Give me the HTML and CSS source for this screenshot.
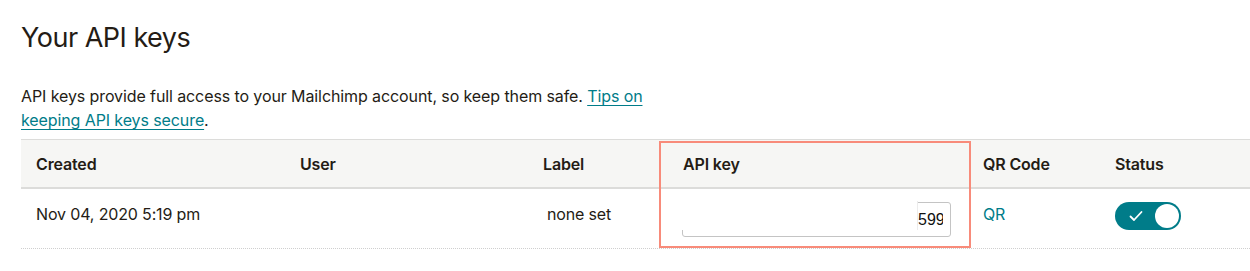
FILE: index.html
```html
<!DOCTYPE html>
<html>
<head>
    <meta name="viewport" content="width=device-width, initial-scale=1.0">
    <title>Your API keys</title>
    <link rel="stylesheet" href="styles.css">
</head>
<body>
    <div class="page">
        <h1 class="title">Your API keys</h1>
        <p class="intro">API keys provide full access to your Mailchimp account, so keep them safe. <a href="#">Tips on keeping API keys secure</a>.</p>

        <div class="keys">
            <div class="row head">
                <div class="cell">Created</div>
                <div class="cell">User</div>
                <div class="cell label-cell">Label</div>
                <div class="cell">API key</div>
                <div class="cell">QR Code</div>
                <div class="cell">Status</div>
            </div>
            <div class="row body">
                <div class="cell">Nov 04, 2020 5:19 pm</div>
                <div class="cell"></div>
                <div class="cell label-cell none">none set</div>
                <div class="cell">
                    <div class="key-field">
                        <!-- partie masquée de la clé -->
                        <div class="key-mask"></div>
                        <div class="key-text">5990</div>
                    </div>
                </div>
                <div class="cell"><a href="#" class="qr">QR</a></div>
                <div class="cell">
                    <div class="toggle">
                        <svg class="check" width="14" height="12" viewBox="0 0 14 12">
                            <path d="M1.5 6.5 L5 10 L12.5 2" fill="none" stroke="#fff" stroke-width="1.8" stroke-linecap="round" stroke-linejoin="round"/>
                        </svg>
                        <div class="knob"></div>
                    </div>
                </div>
            </div>
            <!-- cadre d'annotation -->
            <div class="highlight"></div>
        </div>
    </div>
</body>
</html>
```

FILE: styles.css
```css
body {
    margin: 0;
    font-family: "Inter", "Liberation Sans", sans-serif;
    color: #241c15;
    background: #fff;
}
.page {
    padding: 20px 0 0 21px;
}
.title {
    font-size: 27px;
    font-weight: 400;
    line-height: 36px;
    margin: 0;
    letter-spacing: -0.5px;
}
.intro {
    font-size: 16px;
    line-height: 24px;
    margin: 28px 0 7px 0;
    max-width: 640px;
    letter-spacing: -0.1px;
}
.intro a {
    color: #007c89;
    text-decoration: underline;
    text-underline-offset: 3px;
}
.keys {
    position: relative;
}
.row {
    display: grid;
    grid-template-columns: 264px 243px 140px 300px 132px 1fr;
    align-items: center;
    font-size: 16px;
    line-height: 24px;
    letter-spacing: -0.15px;
}
.head {
    background: #f6f6f4;
    border-top: 1px solid #dcdcda;
    border-bottom: 2px solid #dcdcda;
    height: 47px;
    font-weight: 600;
}
.body {
    height: 60px;
    box-sizing: border-box;
    align-items: start;
    padding-top: 13px;
    border-bottom: 1px dotted #cfcfcf;
}
.cell {
    padding: 0 15px;
}
.none {
    padding-left: 19px;
}
.key-field {
    position: relative;
    width: 269px;
    height: 35px;
    box-sizing: border-box;
    border: 1px solid #c4c4c4;
    border-radius: 3px;
    margin-left: -1px;
}
.key-mask {
    position: absolute;
    left: -2px;
    top: -2px;
    width: 236px;
    height: 29px;
    background: #fff;
    border-right: 1px solid #ececec;
}
.key-text {
    position: absolute;
    top: 0;
    bottom: 0;
    left: 235px;
    width: 25px;
    overflow: hidden;
    white-space: nowrap;
    display: flex;
    align-items: center;
    font-family: "Liberation Sans", Arial, sans-serif;
    font-size: 16px;
    letter-spacing: 0;
    color: #111;
}
.qr {
    color: #007c89;
    text-decoration: none;
}
.toggle {
    width: 66px;
    height: 28px;
    border-radius: 14px;
    background: #007c89;
    display: flex;
    align-items: center;
    justify-content: space-between;
    padding: 0 2px 0 14px;
    box-sizing: border-box;
}
.knob {
    width: 24px;
    height: 24px;
    border-radius: 50%;
    background: #fff;
}
.highlight {
    position: absolute;
    left: 638px;
    top: 2px;
    width: 308px;
    height: 103px;
    border: 2px solid #f88b7a;
}
```
